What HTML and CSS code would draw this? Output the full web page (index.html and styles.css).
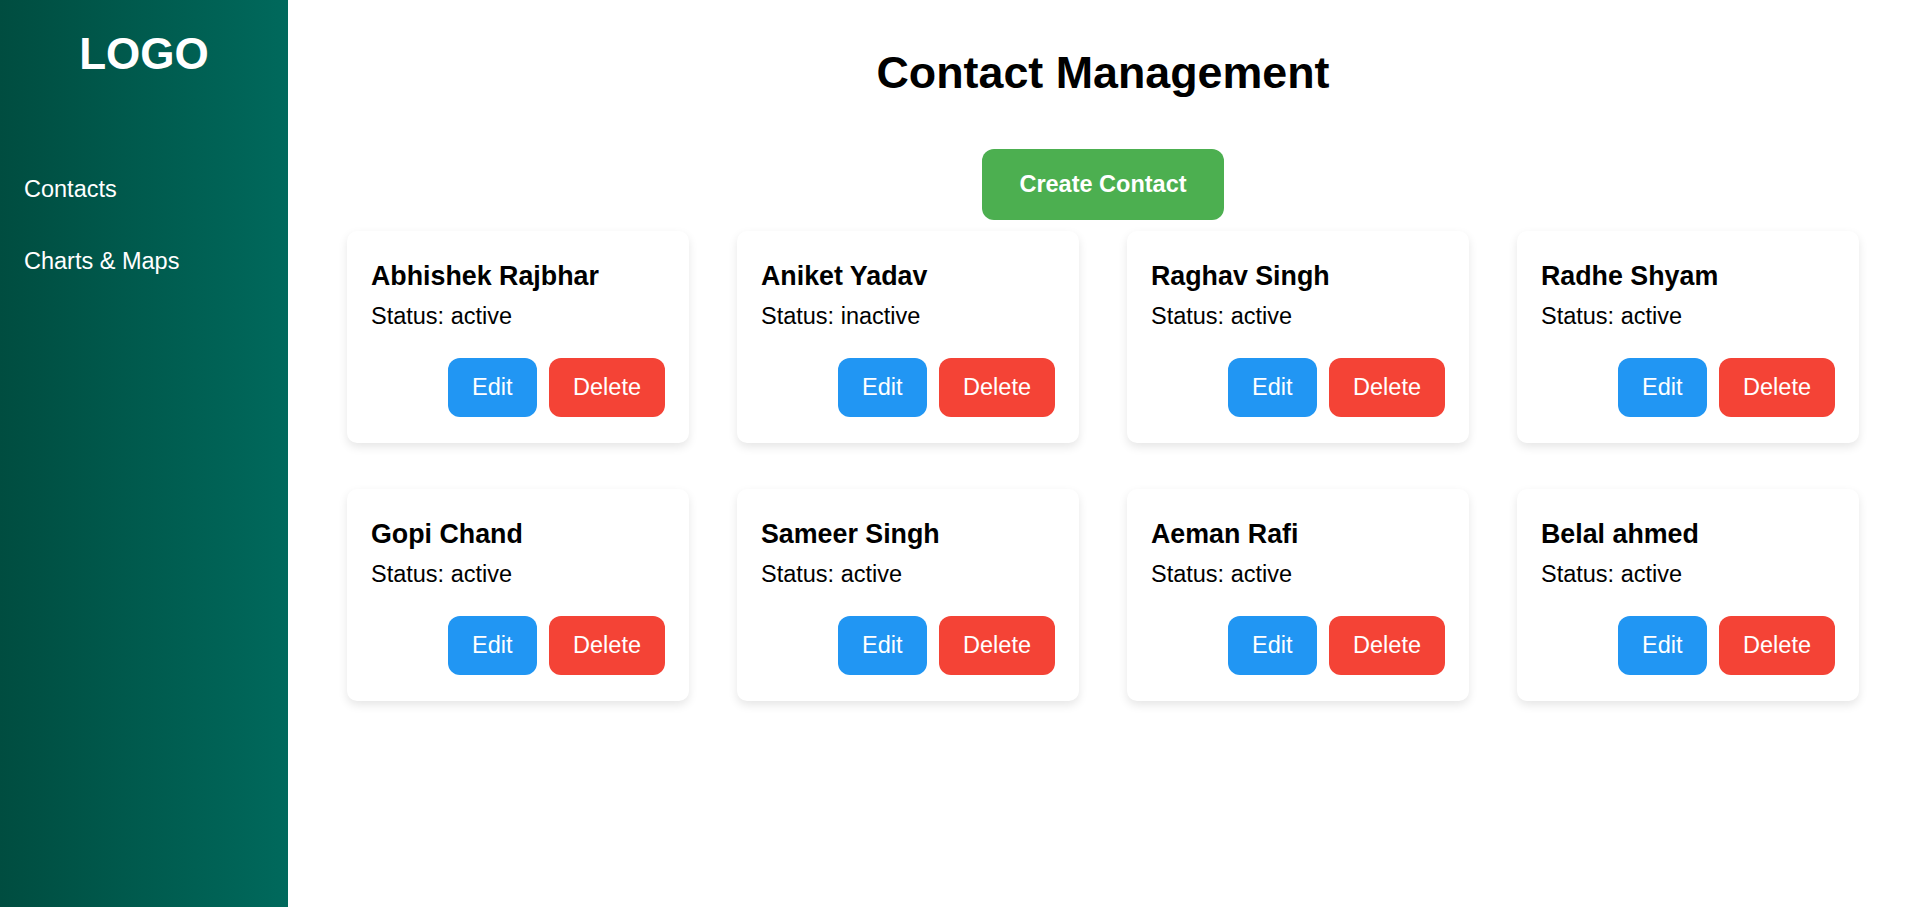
FILE: index.html
```html
<!DOCTYPE html>
<html lang="en">
<head>
<meta charset="utf-8">
<title>Contact Management</title>
<link rel="stylesheet" href="styles.css">
</head>
<body>
<div class="layout">
  <aside class="sidebar">
    <div class="logo">LOGO</div>
    <nav class="nav">
      <a class="nav-item" href="#">Contacts</a>
      <a class="nav-item" href="#">Charts &amp; Maps</a>
    </nav>
  </aside>
  <main class="main">
    <h1 class="title">Contact Management</h1>
    <div class="create-row">
      <button class="btn btn-create">Create Contact</button>
    </div>
    <div class="grid">
      <div class="card">
        <h3 class="card-name">Abhishek Rajbhar</h3>
        <p class="card-status">Status: active</p>
        <div class="card-actions"><button class="btn btn-edit">Edit</button><button class="btn btn-delete">Delete</button></div>
      </div>
      <div class="card">
        <h3 class="card-name">Aniket Yadav</h3>
        <p class="card-status">Status: inactive</p>
        <div class="card-actions"><button class="btn btn-edit">Edit</button><button class="btn btn-delete">Delete</button></div>
      </div>
      <div class="card">
        <h3 class="card-name">Raghav Singh</h3>
        <p class="card-status">Status: active</p>
        <div class="card-actions"><button class="btn btn-edit">Edit</button><button class="btn btn-delete">Delete</button></div>
      </div>
      <div class="card">
        <h3 class="card-name">Radhe Shyam</h3>
        <p class="card-status">Status: active</p>
        <div class="card-actions"><button class="btn btn-edit">Edit</button><button class="btn btn-delete">Delete</button></div>
      </div>
      <div class="card">
        <h3 class="card-name">Gopi Chand</h3>
        <p class="card-status">Status: active</p>
        <div class="card-actions"><button class="btn btn-edit">Edit</button><button class="btn btn-delete">Delete</button></div>
      </div>
      <div class="card">
        <h3 class="card-name">Sameer Singh</h3>
        <p class="card-status">Status: active</p>
        <div class="card-actions"><button class="btn btn-edit">Edit</button><button class="btn btn-delete">Delete</button></div>
      </div>
      <div class="card">
        <h3 class="card-name">Aeman Rafi</h3>
        <p class="card-status">Status: active</p>
        <div class="card-actions"><button class="btn btn-edit">Edit</button><button class="btn btn-delete">Delete</button></div>
      </div>
      <div class="card">
        <h3 class="card-name">Belal ahmed</h3>
        <p class="card-status">Status: active</p>
        <div class="card-actions"><button class="btn btn-edit">Edit</button><button class="btn btn-delete">Delete</button></div>
      </div>
    </div>
  </main>
</div>
</body>
</html>
```

FILE: styles.css
```css
* {
  box-sizing: border-box;
}

html, body {
  margin: 0;
  padding: 0;
  height: 100%;
}

body {
  font-family: "Liberation Sans", Arial, sans-serif;
  font-size: 23.5px;
  color: #000;
  background: #fff;
  overflow: hidden;
}

.layout {
  display: flex;
  height: 100vh;
}

.sidebar {
  width: 288px;
  flex-shrink: 0;
  background: linear-gradient(to right, #004d40, #00695c);
  color: #fff;
  padding-top: 28px;
}

.logo {
  font-size: 44px;
  font-weight: bold;
  text-align: center;
  line-height: 51px;
}

.nav {
  display: flex;
  flex-direction: column;
  margin-top: 74px;
}

.nav-item {
  color: #fff;
  text-decoration: none;
  font-size: 23.5px;
  line-height: 27px;
  padding: 22.5px 24px;
}

.main {
  flex: 1;
  padding: 0 59px;
}

.title {
  font-size: 44.8px;
  font-weight: bold;
  text-align: center;
  margin: 46.5px 0 0;
  line-height: 51.5px;
}

.create-row {
  display: flex;
  justify-content: center;
  margin-top: 50.5px;
}

.btn {
  font-family: "Liberation Sans", Arial, sans-serif;
  border: none;
  color: #fff;
  cursor: pointer;
  border-radius: 12px;
  font-size: 23.5px;
  line-height: 27px;
}

.btn-create {
  background: #4caf50;
  font-weight: bold;
  padding: 22px 37px;
  border-radius: 12px;
}

.grid {
  display: grid;
  grid-template-columns: repeat(4, 1fr);
  column-gap: 48px;
  row-gap: 46px;
  margin-top: 11px;
}

.card {
  background: #fff;
  border-radius: 10px;
  box-shadow: 0 4px 10px rgba(0, 0, 0, 0.1);
  padding: 24px;
  height: 212px;
}

.card-name {
  font-size: 26.8px;
  font-weight: bold;
  line-height: 31px;
  margin: 6px 0 11px;
}

.card-status {
  margin: 0 0 28px;
  line-height: 27px;
}

.card-actions {
  display: flex;
  justify-content: flex-end;
  gap: 12px;
}

.btn-edit {
  background: #2196f3;
  padding: 16px 24.5px;
}

.btn-delete {
  background: #f44336;
  padding: 16px 24px;
}
```
